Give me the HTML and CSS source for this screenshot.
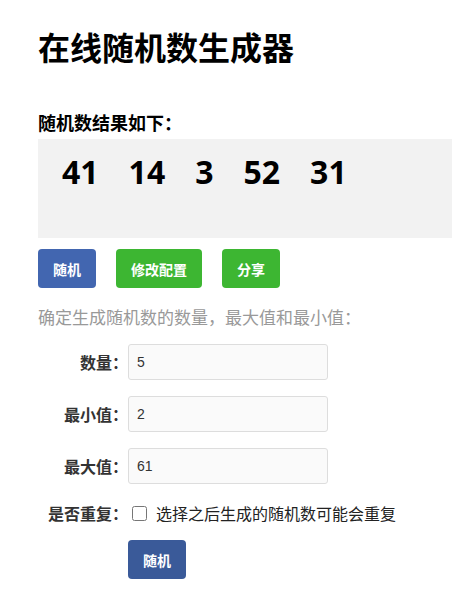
FILE: index.html
```html
<!DOCTYPE html>
<html lang="zh-CN">
<head>
    <meta charset="UTF-8">
    <title>在线随机数生成器</title>
    <meta name="viewport" content="width=device-width, initial-scale=1.0">
    <link rel="stylesheet" href="styles.css">
</head>
<body>
    <div class="page">
        <h1 class="page-title">在线随机数生成器</h1>

        <div class="result-title">随机数结果如下：</div>
        <div class="result-box">
            <span class="num">41</span>
            <span class="num">14</span>
            <span class="num">3</span>
            <span class="num">52</span>
            <span class="num">31</span>
        </div>

        <div class="actions">
            <button class="btn btn-blue">随机</button>
            <button class="btn btn-green">修改配置</button>
            <button class="btn btn-green">分享</button>
        </div>

        <div class="hint">确定生成随机数的数量，最大值和最小值：</div>

        <div class="form">
            <div class="form-row">
                <label class="form-label">数量：</label>
                <input class="form-input" type="text" value="5">
            </div>
            <div class="form-row">
                <label class="form-label">最小值：</label>
                <input class="form-input" type="text" value="2">
            </div>
            <div class="form-row">
                <label class="form-label">最大值：</label>
                <input class="form-input" type="text" value="61">
            </div>
            <div class="form-row check-row">
                <label class="form-label">是否重复：</label>
                <label class="check">
                    <input type="checkbox">
                    <span>选择之后生成的随机数可能会重复</span>
                </label>
            </div>
            <div class="form-row submit-row">
                <button class="btn btn-dark">随机</button>
            </div>
        </div>
    </div>
</body>
</html>
```

FILE: styles.css
```css
body {
    margin: 0;
    padding: 0;
    background: #fff;
    color: #000;
    font-family: "Noto Sans CJK SC", "Noto Sans", sans-serif;
}
.page {
    padding: 0 0 0 38px;
}
.page-title {
    margin: 0;
    padding-top: 27px;
    font-size: 32px;
    line-height: 38px;
    font-weight: bold;
}
.result-title {
    margin-top: 46px;
    font-size: 18px;
    line-height: 22px;
    font-weight: bold;
}
.result-box {
    margin-top: 6px;
    height: 99px;
    box-sizing: border-box;
    background: #f2f2f2;
    padding: 11px 0 0 24px;
    display: flex;
    gap: 30px;
}
.num {
    font-family: "Open Sans", "Noto Sans", sans-serif;
    font-size: 32px;
    font-weight: bold;
    line-height: 44px;
}
.actions {
    display: flex;
    gap: 20px;
    margin-top: 11px;
}
.btn {
    height: 39px;
    padding: 0 15px;
    border: none;
    border-radius: 4px;
    color: #fff;
    font-family: inherit;
    font-size: 14px;
    font-weight: bold;
    cursor: pointer;
}
.btn-blue {
    background: #4266b0;
}
.btn-green {
    background: #3db632;
}
.btn-dark {
    background: #3a5a99;
}
.hint {
    margin-top: 17px;
    color: #999;
    font-size: 17px;
    line-height: 24px;
}
.form {
    margin-top: 15px;
    margin-left: -38px;
    display: flex;
    flex-direction: column;
    gap: 16px;
}
.form-row {
    display: flex;
    align-items: center;
}
.form-label {
    width: 128px;
    text-align: right;
    font-size: 16px;
    font-weight: bold;
    color: #333;
}
.form-input {
    width: 200px;
    height: 36px;
    box-sizing: border-box;
    border: 1px solid #ddd;
    border-radius: 3px;
    background: #fafafa;
    padding: 0 8px;
    font-family: "Liberation Sans", Arial, sans-serif;
    font-size: 14px;
    color: #333;
}
.check-row {
    height: 26px;
}
.check {
    display: flex;
    align-items: center;
    font-size: 16px;
    color: #222;
}
.check input {
    width: 15px;
    height: 15px;
    margin: 0 9px 0 4px;
}
.submit-row {
    margin-top: -2px;
    padding-left: 128px;
}
```
